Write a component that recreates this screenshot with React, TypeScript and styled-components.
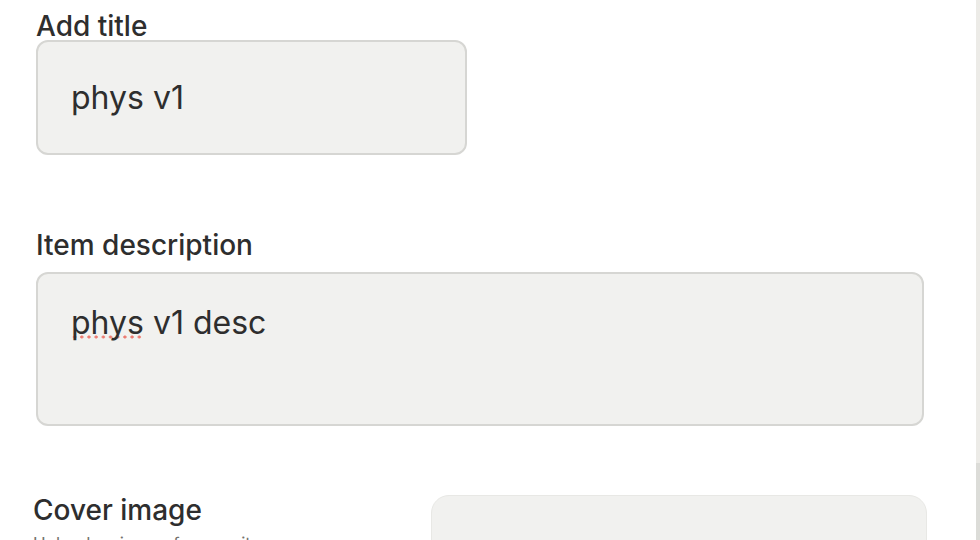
import React from "react";
import styled, { createGlobalStyle } from "styled-components";

const Global = createGlobalStyle`
  html, body { margin: 0; padding: 0; background: #ffffff; }
  body { font-family: Inter, "Noto Sans", sans-serif; color: #2e2e2e; overflow: hidden; }
  * { box-sizing: border-box; }
`;

const Page = styled.div`
  display: flex;
  width: 980px;
  height: 540px;
  overflow: hidden;
`;

const Content = styled.main`
  flex: 1;
  display: flex;
  flex-direction: column;
  padding: 12px 0 0 36px;
`;

const Field = styled.section<{ $gap?: number }>`
  display: flex;
  flex-direction: column;
  margin-bottom: ${(p) => p.$gap ?? 0}px;
`;

const Label = styled.label<{ $mb?: number }>`
  font-size: 28px;
  line-height: 28px;
  font-weight: 500;
  color: #2e2e2e;
  margin-bottom: ${(p) => p.$mb ?? 0}px;
`;

const TitleInput = styled.div`
  width: 431px;
  height: 115px;
  display: flex;
  align-items: center;
  padding-left: 33px;
  background: #f1f1ef;
  border: 2px solid #d6d6d3;
  border-radius: 12px;
  font-size: 32px;
  color: #2e2e2e;
`;

const TextArea = styled.div`
  width: 888px;
  height: 154px;
  padding: 29px 33px;
  background: #f1f1ef;
  border: 2px solid #d6d6d3;
  border-radius: 12px;
  font-size: 32px;
  line-height: 40px;
  color: #2e2e2e;
`;

const Misspelled = styled.span`
  background-image: radial-gradient(circle, #ec7a70 1.3px, transparent 1.8px);
  background-size: 7.2px 4px;
  background-repeat: repeat-x;
  background-position: 0 calc(100% - 3px);
`;

const CoverRow = styled.div`
  display: flex;
  align-items: flex-start;
`;

const CoverText = styled.div`
  width: 398px;
  display: flex;
  flex-direction: column;
  margin: -2px 0 0 -3px;
`;

const CoverTitle = styled.div`
  font-size: 28px;
  line-height: 34px;
  font-weight: 500;
  color: #2e2e2e;
`;

const CoverHint = styled.div`
  font-size: 17px;
  line-height: 24px;
  color: #73726d;
  margin-top: 5px;
`;

const Dropzone = styled.div`
  width: 496px;
  height: 200px;
  background: #f1f1ef;
  border: 1px solid #e8e8e5;
  border-radius: 18px;
`;

const ScrollTrack = styled.div`
  width: 4px;
  height: 540px;
  background: #ecebe7;
  display: flex;
  flex-direction: column;
  justify-content: flex-end;
`;

const ScrollThumb = styled.div`
  height: 77px;
  background: #dcdcd8;
`;

export default function App() {
  return (
    <Page>
      <Global />
      <Content>
        <Field $gap={76}>
          <Label>Add title</Label>
          <TitleInput>phys v1</TitleInput>
        </Field>
        <Field $gap={69}>
          <Label $mb={13}>Item description</Label>
          <TextArea>
            <Misspelled>phys</Misspelled> v1 desc
          </TextArea>
        </Field>
        <CoverRow>
          <CoverText>
            <CoverTitle>Cover image</CoverTitle>
            <CoverHint>Upload an image for your item</CoverHint>
          </CoverText>
          <Dropzone />
        </CoverRow>
      </Content>
      <ScrollTrack>
        <ScrollThumb />
      </ScrollTrack>
    </Page>
  );
}
